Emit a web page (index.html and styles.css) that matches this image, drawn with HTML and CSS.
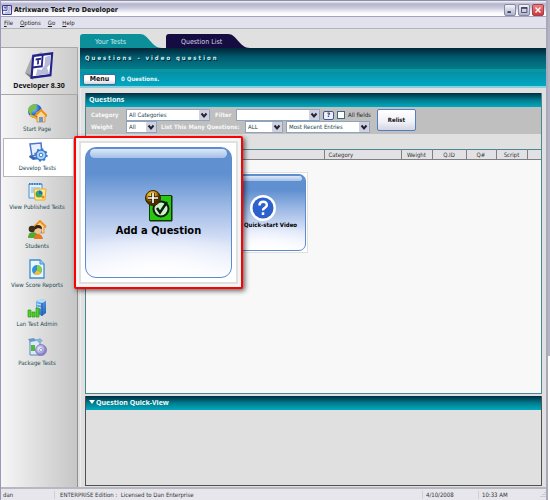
FILE: index.html
```html
<!DOCTYPE html>
<html lang="en">
<head>
<meta charset="utf-8">
<title>Atrixware Test Pro Developer</title>
<link rel="stylesheet" href="styles.css">
</head>
<body>
<svg class="defs" aria-hidden="true">
  <defs>
    <linearGradient id="blue" x1="0" y1="0" x2="1" y2="1"><stop offset="0" stop-color="#7fc4f4"/><stop offset="1" stop-color="#1c5cb8"/></linearGradient>
    <radialGradient id="globe" cx=".35" cy=".3"><stop offset="0" stop-color="#a8e0ff"/><stop offset="1" stop-color="#1460d0"/></radialGradient>
    <radialGradient id="gold" cx=".4" cy=".3"><stop offset="0" stop-color="#ffe060"/><stop offset=".6" stop-color="#c89008"/><stop offset="1" stop-color="#4a3000"/></radialGradient>
    <radialGradient id="disc" cx=".4" cy=".4"><stop offset="0" stop-color="#fff"/><stop offset=".6" stop-color="#b8b4e8"/><stop offset="1" stop-color="#8880c8"/></radialGradient>
    <g id="house"><path d="M0 6 6 0l6 6-2 0v6H2V6z" fill="#ffd890" stroke="#c87820" stroke-width=".7"/><path d="M0 6 6 0l6 6" fill="none" stroke="#f0901c" stroke-width="2"/><path d="M4 7h4v5H4z" fill="#6c94d8"/></g>
    <g id="brand"><path d="M1 1h14v14H1z" fill="#fff" stroke="#23238c" stroke-width="1.6"/><path d="M1 8.500h7V1" fill="none" stroke="#23238c" stroke-width="1.400"/><path d="M3 3.500h4M5 3.500V7" stroke="#23238c" stroke-width="1.300"/><path d="M10 3l4-1v6l-2 2 2 4H4l1-4 3 1 2-3z" fill="#b9bcd8"/></g>
  </defs>
</svg>
<div class="desktop">
<div class="window">
  <header class="titlebar">
    <svg class="app-icon" viewBox="0 0 16 16"><use href="#brand"/></svg>
    <h1>Atrixware Test Pro Developer</h1>
    <button class="win" aria-label="Minimize"><svg viewBox="0 0 12 12"><path d="M3 8.500h4" stroke="#303048" stroke-width="2"/></svg></button>
    <button class="win" aria-label="Maximize"><svg viewBox="0 0 12 12"><path d="M3 3.500h6.500V9H3z" fill="none" stroke="#404058"/><path d="M2.500 3.500h7.500" stroke="#404058" stroke-width="2"/></svg></button>
    <button class="win close" aria-label="Close"><svg viewBox="0 0 12 12"><path d="M3 3l6 6M9 3l-6 6" stroke="#fff" stroke-width="1.600"/></svg></button>
  </header>
  <nav class="menubar">
    <a href="#"><u>F</u>ile</a><a href="#"><u>O</u>ptions</a><a href="#"><u>G</u>o</a><a href="#"><u>H</u>elp</a>
  </nav>
  <div class="body">
    <aside class="sidebar">
      <div class="brand">
        <svg viewBox="0 0 30 30"><path d="M1 22l7-17 10-4-10 27z" fill="#a9abad"/><path d="M1 22l6 2 2 5z" fill="#777"/><g transform="matrix(1.350 -.18 -.12 1.550 8 3.500)"><use href="#brand"/></g></svg>
        <strong>Developer 8.30</strong>
      </div>
      <nav class="nav">
        <a href="#"><svg viewBox="0 0 20 20"><circle cx="8" cy="8" r="7" fill="url(#globe)"/><path d="M2 4q4-4 8-2l-1 4-4 2-1 4q-4-4-2-8zM9 9l4-1 1 3-4 3z" fill="#7cc043"/><path d="M3 12l8 4" stroke="#f0b020" stroke-width="2"/><use href="#house" x="8" y="7"/></svg><span>Start Page</span></a>
        <a href="#" class="active"><svg viewBox="0 0 20 20"><path d="M2 2l11-1 1 11-10 2z" fill="#e8f0ff" stroke="#4c74c8" stroke-width="1.500"/><path d="M2 13l9 4-6 1-4-3z" fill="#3864b8"/><circle cx="13" cy="13" r="5" fill="#a8d4f8" stroke="#3c78c8" stroke-width="1.300"/><circle cx="13" cy="13" r="5.800" fill="none" stroke="#3c78c8" stroke-width="1.800" stroke-dasharray="2 2.500"/><circle cx="13" cy="13" r="1.800" fill="#fff" stroke="#3c78c8"/></svg><span>Develop Tests</span></a>
        <a href="#"><svg viewBox="0 0 20 20"><path d="M2 3h13v14H2z" fill="#e4f2ff" stroke="#4890d0"/><path d="M2 3h13" stroke="#3880c4" stroke-width="2" stroke-dasharray="1.500 1"/><path d="M4 7h9M4 9h9M4 11h5" stroke="#80b4e0"/><path d="M7 8h12l-1 11H8z" fill="#ffe890" stroke="#e8b030"/><circle cx="12" cy="13" r="3.500" fill="#40a850"/><path d="M12 13V9.500a3.500 3.500 0 0 1 3.500 3.500z" fill="#2868c8"/><circle cx="16" cy="16" r="1.600" fill="#f08820"/></svg><span>View Published Tests</span></a>
        <a href="#"><svg viewBox="0 0 20 20"><use href="#house" x="7" y="1"/><circle cx="5" cy="9" r="3.300" fill="#3c2c1c"/><path d="M1 18q0-6 5-6t5 6z" fill="#50a838"/><circle cx="11" cy="10" r="3.500" fill="#f4c48c"/><path d="M7 10q0-5 4-5t4 4l-4-1z" fill="#30241c"/><path d="M7 19q0-5 4-5t5 5z" fill="#e87820"/></svg><span>Students</span></a>
        <a href="#"><svg viewBox="0 0 20 20"><path d="M3 1h10l4 4v14H3z" fill="#eaf6ff" stroke="#3c8cd0" stroke-width="1.300"/><path d="M13 1v4h4" fill="#a0d0f4" stroke="#3c8cd0"/><circle cx="10" cy="11" r="5" fill="#3090e0"/><path d="M10 11V6a5 5 0 0 1 4 8z" fill="#8cd040"/><path d="M10 11l4 3a5 5 0 0 1-7 1z" fill="#f8c030"/></svg><span>View Score Reports</span></a>
        <a href="#"><svg viewBox="0 0 20 20"><path d="M9 3l6-2 4 2v12l-4 3-6-3z" fill="url(#blue)"/><path d="M9 3l6-2 4 2-4 2z" fill="#b4e0fc"/><path d="M15 5v13" stroke="#1850a0" stroke-width=".8"/><path d="M10 6l4 1M10 9l4 1" stroke="#d8f0ff"/><path d="M1 12h3v7H1zM5 14h3v5H5zM9 10h3v9H9z" fill="#50d028" stroke="#289810" stroke-width=".7"/></svg><span>Lan Test Admin</span></a>
        <a href="#"><svg viewBox="0 0 20 20"><path d="M3 3h10v15H3z" fill="#dceaf8" stroke="#5c88b8"/><path d="M1 2l6-1 2 3-6 1z" fill="#6898c8"/><path d="M9 3l4-2 3 3-4 2z" fill="#88b0d8"/><path d="M4 8h4v6H4z" fill="#50b840"/><circle cx="14" cy="13" r="5.500" fill="url(#disc)" stroke="#7870b0" stroke-width=".7"/><circle cx="14" cy="13" r="1.500" fill="#fff" stroke="#8880c0" stroke-width=".7"/></svg><span>Package Tests</span></a>
      </nav>
    </aside>
    <main class="main">
      <nav class="tabs">
        <a href="#" class="tab tests"><span>Your Tests</span><svg viewBox="0 0 22 14" preserveAspectRatio="none"><path d="M0 0C9 0 11 14 22 14H0z"/></svg></a>
        <a href="#" class="tab list"><span>Question List</span><svg viewBox="0 0 22 14" preserveAspectRatio="none"><path d="M0 0C9 0 11 14 22 14H0z"/></svg></a>
      </nav>
      <section class="banner">
        <h2>Questions - video question</h2>
        <div class="actions"><button class="menu-btn">Menu</button><span>0 Questions.</span></div>
      </section>
      <div class="content">
        <section class="panel questions">
          <h3>Questions</h3>
          <form class="filters">
            <div class="rows">
              <div class="row">
                <label class="first" for="cat">Category</label>
                <span class="pick wide"><select id="cat"><option>All Categories</option></select><svg viewBox="0 0 10 10"><path d="M2.500 3.500 5 6.500l2.500-3" /></svg></span>
                <label class="flt" for="flt">Filter</label>
                <span class="pick wide"><select id="flt"><option></option></select><svg viewBox="0 0 10 10"><path d="M2.500 3.500 5 6.500l2.500-3" /></svg></span>
                <button type="button" class="help">?</button>
                <input type="checkbox" id="all"><label class="plain" for="all">All fields</label>
              </div>
              <div class="row">
                <label class="first" for="wt">Weight</label>
                <span class="pick small"><select id="wt"><option>All</option></select><svg viewBox="0 0 10 10"><path d="M2.500 3.500 5 6.500l2.500-3" /></svg></span>
                <label class="count" for="many">List This Many Questions:</label>
                <span class="pick mid"><select id="many"><option>ALL</option></select><svg viewBox="0 0 10 10"><path d="M2.500 3.500 5 6.500l2.500-3" /></svg></span>
                <span class="pick wide"><select aria-label="Order"><option>Most Recent Entries</option></select><svg viewBox="0 0 10 10"><path d="M2.500 3.500 5 6.500l2.500-3" /></svg></span>
              </div>
            </div>
            <button type="button" class="relist">Relist</button>
          </form>
          <div class="strip"><i></i><i></i></div>
          <table class="grid">
            <thead><tr><th class="c-name"></th><th class="c-cat">Category</th><th class="c-w">Weight</th><th class="c-id">Q.ID</th><th class="c-q">Q#</th><th class="c-w">Script</th><th></th></tr></thead>
          </table>
          <div class="results">
            <button class="card"><span class="face"><svg viewBox="0 0 26 26"><circle cx="13" cy="13" r="13" fill="#fff"/><circle cx="13" cy="13" r="10.500" fill="#2c60cc"/><path d="M9.500 10.500q0-3.700 3.700-3.700t3.600 3.200q0 1.800-2 2.900t-1.700 2.500M13 17.300v2.600" fill="none" stroke="#fff" stroke-width="2.500"/></svg><span>Quick-start Video</span></span></button>
          </div>
        </section>
        <section class="panel quick">
          <h3><svg viewBox="0 0 6 4"><path d="M0 0h6L3 4z" fill="#fff"/></svg>Question Quick-View</h3>
        </section>
      </div>
    </main>
  </div>
  <footer class="status">
    <span class="user">dan</span><span class="lic">ENTERPRISE Edition :&nbsp; Licensed to Dan Enterprise</span><span class="date">4/10/2008</span><span class="time">10:33 AM</span>
    <svg viewBox="0 0 8 8"><path d="M7 1v6M5 3v4M3 5v2M1 7" stroke="#b0b0b8" stroke-dasharray="1 1"/></svg>
  </footer>
</div>
<div class="scroll"></div>
</div>
<div class="popup">
  <button class="card big"><span class="face"><svg viewBox="0 0 28 32"><path d="M4.500 5.500h22v25h-22z" fill="#28c810" stroke="#083c04"/><path d="M27 6v25H5" fill="none" stroke="#0c3008"/><circle cx="16" cy="19" r="7.500" fill="#c8f4c8" stroke="#0c1c0c" stroke-width="2"/><path d="M12 18l3 4.500L22 12" fill="none" stroke="#0c1c0c" stroke-width="2.400"/><circle cx="8" cy="8" r="7.500" fill="url(#gold)" stroke="#382400"/><path d="M8 3v10M3 8h10" stroke="#302000" stroke-width="3.500"/><path d="M8 3v10M3 8h10" stroke="#fff" stroke-width="1.700"/></svg><span>Add a Question</span></span></button>
</div>
</body>
</html>
```
FILE: styles.css
```css
* { box-sizing: border-box; }
html, body { height: 100%; }
body {
  margin: 0;
  font: 6px/8px "DejaVu Sans Condensed", "DejaVu Sans", sans-serif;
  color: #222;
  background: #fff;
  overflow: hidden;
}
h1, h2, h3 { margin: 0; font-size: 7px; line-height: 10px; }
a { color: inherit; text-decoration: none; }
button, select, input { font: inherit; color: inherit; margin: 0; padding: 0; }
button { cursor: pointer; }
.defs { position: absolute; width: 0; height: 0; }

.desktop { display: flex; height: 100vh; }
.window {
  flex: 1;
  min-width: 0;
  display: flex;
  flex-direction: column;
  border-left: 1px solid #9a98b8;
  border-right: 2px solid #a9a9bd;
  background: #e0e0e0;
}
.scroll { width: 2px; height: 356px; background: #b4b4c2; }

.titlebar {
  display: flex;
  align-items: center;
  gap: 2px;
  height: 17px;
  padding: 2px 2px 0 1px;
  border-top: 1px solid #8f8ea8;
  border-bottom: 1px solid #a4a4b4;
  background: linear-gradient(#f8f8fc 0, #b4b4cc 20%, #c8c8dc 45%, #fafafd 80%, #fff);
}
.titlebar h1 { flex: 1; color: #111; }
.app-icon { width: 10px; height: 10px; }
.win {
  width: 12px;
  height: 12px;
  border: 1px solid #8688a8;
  border-radius: 2px;
  background: linear-gradient(#f4f4fa, #b0b2cc);
}
.win svg { display: block; width: 10px; height: 10px; }
.win.close { border-color: #a04050; background: linear-gradient(#f08080, #cc3838); }

.menubar {
  display: flex;
  align-items: center;
  gap: 7px;
  height: 12px;
  padding: 0 3px;
  border-bottom: 1px solid #b4b4bc;
  background: #e2e2ee;
}

.body { flex: 1; display: flex; min-height: 0; }
.sidebar { width: 79px; padding-top: 18px; display: flex; flex-direction: column; }
.brand {
  height: 48px;
  margin-right: 2px;
  padding-top: 3px;
  display: flex;
  flex-direction: column;
  align-items: center;
  border: 1px solid #a8a8a8;
  border-width: 1px 1px 1px 0;
  background: linear-gradient(90deg, #f4f4f4, #cbcbcb);
  color: #111;
}
.brand svg { width: 30px; height: 30px; }
.brand strong { font: bold 7px/9px "Noto Sans", sans-serif; }
.nav {
  flex: 1;
  margin-right: 2px;
  padding: 4px 4px 0 2px;
  border-right: 1px solid #909090;
  background: linear-gradient(90deg, #f6f6f6, #dedede 50%, #c6c6c6);
}
.nav a {
  display: flex;
  flex-direction: column;
  align-items: center;
  height: 39px;
  padding: 3px 2px 0 0;
  border: 1px solid transparent;
  color: #1c4a50;
  white-space: nowrap;
}
.nav a.active { background: #fff; border-color: #b8b8b8; border-right: 0; }
.nav svg { width: 20px; height: 20px; margin-bottom: 2px; }

.main { flex: 1; min-width: 0; display: flex; flex-direction: column; }
.tabs { display: flex; gap: 4px; height: 19px; align-items: flex-end; }
.tab { display: flex; height: 14px; width: 82px; font-size: 7px; line-height: 17px; }
.tab span { flex: 1; padding-left: 15px; border-radius: 3px 0 0 0; white-space: nowrap; }
.tab svg { width: 22px; height: 14px; }
.tests { color: #c8ecee; fill: #0b8f99; }
.tests span { background: #0b8f99; }
.list { color: #d4d0e4; fill: #150d42; width: 84px; }
.list span { background: #150d42; }

.banner { border-bottom: 2px solid #88cfdc; color: #e8f6f8; }
.banner h2 {
  height: 21px;
  padding: 5px;
  font-size: 6px;
  letter-spacing: 2px;
  color: #d0f0f4;
  text-shadow: 1px 1px #002028;
  background: linear-gradient(#012438, #015c70 45%, #027c8a);
}
.actions {
  display: flex;
  align-items: center;
  gap: 5px;
  height: 17px;
  padding: 0 3px;
  border-top: 3px solid #0897a0;
  background: linear-gradient(#0590a6, #00a8c2);
  font-weight: bold;
}
.menu-btn {
  width: 33px;
  height: 11px;
  border: 1px solid #406c98;
  border-radius: 2px;
  background: linear-gradient(#fff 50%, #d4d4e0);
  color: #111;
  font-weight: bold;
  font-size: 7px;
}

.content { flex: 1; display: flex; flex-direction: column; gap: 2px; padding: 5px 4px 1px; border-left: 1px solid #ececf0; }
.panel h3 {
  height: 14px;
  padding: 2px 3px;
  font-family: "Noto Sans", sans-serif;
  color: #eefafa;
  background: linear-gradient(#012c40, #017c8e 50%, #00a8be);
}
.questions { flex: 1; display: flex; flex-direction: column; border: 1px solid #4a8790; border-top: 0; background: #f8f8f8; }
.filters { display: flex; gap: 3px; height: 27px; padding: 2px 5px 0; background: #bfbfbf; }
.rows { display: flex; flex-direction: column; }
.row { display: flex; align-items: center; gap: 3px; height: 12px; white-space: nowrap; }
.row label { color: #f8f8f8; font-weight: bold; }
.row .first { width: 32px; }
.row .flt { width: 20px; padding-left: 2px; }
.row .count { width: 82px; padding-left: 1px; }
.row .plain { width: 26px; color: #222; font-weight: normal; }
.row input { width: 8px; height: 8px; appearance: none; border: 1px solid #3c6c80; background: #fff; }
.pick { display: flex; align-items: center; height: 12px; border: 1px solid #8fa4b8; background: #fff; }
.pick select { flex: 1; min-width: 0; height: 10px; padding-left: 2px; border: 0; background: none; appearance: none; color: #1c4450; }
.pick svg { width: 10px; height: 10px; background: #cfd0e0; border-radius: 1px; fill: none; stroke: #223; stroke-width: 2; }
.wide { width: 84px; }
.mid { width: 38px; }
.small { width: 31px; }
.help { width: 11px; height: 9px; border: 1px solid #3c5c90; border-radius: 2px; background: #eef; color: #123; font-weight: bold; line-height: 6px; }
.relist {
  width: 39px;
  height: 22px;
  border: 1px solid #5080c0;
  border-radius: 2px;
  background: linear-gradient(#fff, #f0f0f8 60%, #d4d4e4);
  color: #111;
  font-weight: bold;
}
.strip { display: flex; gap: 2px; height: 15px; padding: 2px 6px; background: #e0e0e0; }
.strip i { width: 52px; height: 2px; background: #707878; }
.grid { width: 100%; table-layout: fixed; border-collapse: collapse; color: #333; }
.grid th {
  height: 10px;
  padding: 0;
  border: 1px solid #808080;
  border-width: 1px 1px 1px 0;
  border-top-color: #4a8790;
  background: #e2e2e6;
  font-weight: normal;
}
.grid th:last-child { border-right: 0; }
.c-name { width: 238px; }
.grid .c-cat { width: 77px; padding-left: 4px; text-align: left; }
.c-w { width: 31px; }
.c-id { width: 34px; }
.c-q { width: 30px; }
.results { padding: 12px 131px; }

.card { display: flex; width: 91px; height: 81px; padding: 1px; border: 1px solid #e0e0e0; background: #fff; }
.face {
  position: relative;
  flex: 1;
  align-self: stretch;
  display: flex;
  flex-direction: column;
  align-items: center;
  padding-top: 20px;
  border: 1px solid #5c8ccc;
  border-radius: 7px;
  background: radial-gradient(ellipse 80% 42% at 50% 105%, #fff 20%, #fff0), linear-gradient(#6090d0 20%, #9cb8e4 45%, #dce4f8 75%, #f8faff);
  color: #000;
  font-weight: bold;
  white-space: nowrap;
}
.face::before {
  content: "";
  position: absolute;
  inset: 1px 3px auto;
  height: 5px;
  border-radius: 5px;
  background: linear-gradient(#dce8f8, #a4c0e8);
}
.card svg { width: 26px; height: 26px; }
.results .face > span { padding-left: 16px; }
.quick { height: 90px; border: 1px solid #505050; border-top: 0; background: #e0e0e0; }
.quick h3 svg { width: 6px; height: 4px; margin: 0 1px 1px 0; }

.popup {
  position: absolute;
  left: 74px;
  top: 136px;
  padding: 3px;
  border: 2px solid #f00;
  border-radius: 2px;
  background: #f6f6f6;
  box-shadow: 2px 2px 5px #0009;
}
.card.big { width: 159px; height: 143px; border: 2px solid #e0e0e0; padding: 4px; }
.big .face { padding-top: 42px; border-radius: 11px; font-size: 11px; line-height: 18px; }
.big .face::before { height: 9px; border-radius: 8px; inset: 1px 4px auto; }
.big svg { width: 28px; height: 32px; }

.status {
  display: flex;
  align-items: center;
  height: 13px;
  border-top: 2px solid #b8b8c0;
  background: #e6e6ec;
  color: #333;
}
.status span { padding-left: 2px; }
.status .user { width: 54px; border-right: 1px solid #d0d0d4; }
.status .lic { flex: 1; padding-left: 5px; }
.status .date { width: 56px; padding-left: 3px; border-left: 1px solid #d0d0d4; }
.status .time { width: 60px; padding-left: 3px; border-left: 1px solid #d0d0d4; }
.status svg { width: 8px; height: 8px; }
```
